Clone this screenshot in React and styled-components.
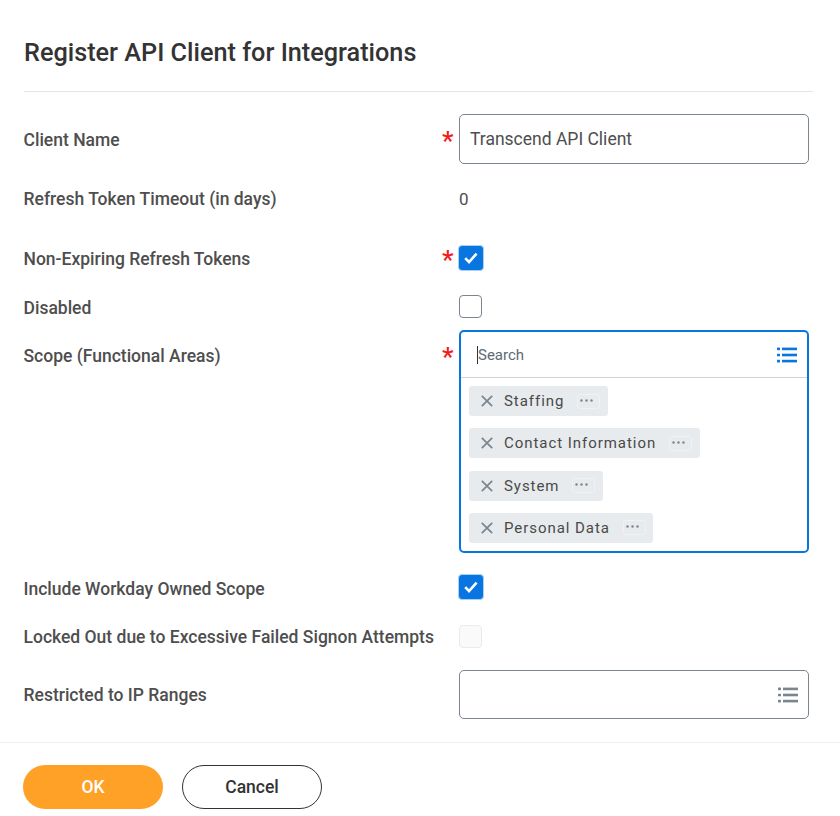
import React from "react"
import styled, { createGlobalStyle } from "styled-components"

const GlobalStyle = createGlobalStyle`
body {
  margin: 0;
  background: #fff;
  font-family: Roboto, "Liberation Sans", sans-serif;
  color: #494949;
}
`

const ListIcon = ({ color }) => (
  <svg width="20" height="16" viewBox="0 0 20 16" fill={color}>
    <rect x="0" y="0.6" width="3" height="2.6" rx="0.6" />
    <rect x="5" y="0.6" width="15" height="2.6" />
    <rect x="0" y="6.7" width="3" height="2.6" rx="0.6" />
    <rect x="5" y="6.7" width="15" height="2.6" />
    <rect x="0" y="12.8" width="3" height="2.6" rx="0.6" />
    <rect x="5" y="12.8" width="15" height="2.6" />
  </svg>
)

const CheckMark = () => (
  <svg width="14" height="12" viewBox="0 0 14 12" fill="none">
    <path d="M1.2 6.2 L5 10 L12.6 1.6" stroke="#fff" strokeWidth="2.6" />
  </svg>
)

const Pill = ({ label }) => (
  <Tag>
    <svg width="12" height="12" viewBox="0 0 12 12" fill="none">
      <path d="M0.8 0.8 L11.2 11.2 M11.2 0.8 L0.8 11.2" stroke="#7b858f" strokeWidth="1.7" />
    </svg>
    <TagLabel>{label}</TagLabel>
    <More>
      <svg width="13" height="3" viewBox="0 0 13 3" fill="#7b858f">
        <circle cx="1.5" cy="1.5" r="1.2" />
        <circle cx="6.5" cy="1.5" r="1.2" />
        <circle cx="11.5" cy="1.5" r="1.2" />
      </svg>
    </More>
  </Tag>
)

export default function App() {
  return (
    <Page>
      <GlobalStyle />
      <Header>
        <Title>Register API Client for Integrations</Title>
      </Header>
      <Form>
        <Row $height={50} $top={22}>
          <Label $offset={1}>Client Name</Label>
          <Star>*</Star>
          <Input>Transcend API Client</Input>
        </Row>
        <Row $height={24} $top={23}>
          <Label>Refresh Token Timeout (in days)</Label>
          <Star />
          <Value>0</Value>
        </Row>
        <Row $height={26} $top={34}>
          <Label $offset={1}>Non-Expiring Refresh Tokens</Label>
          <Star>*</Star>
          <CheckBox $checked><CheckMark /></CheckBox>
        </Row>
        <Row $height={24} $top={23}>
          <Label $offset={2}>Disabled</Label>
          <Star />
          <CheckBox />
        </Row>
        <ScopeRow>
          <Label>Scope (Functional Areas)</Label>
          <Star>*</Star>
          <ScopeBox>
            <SearchBar>
              <Caret />
              <SearchText>Search</SearchText>
              <ListIcon color="#0875e1" />
            </SearchBar>
            <TagList>
              <Pill label="Staffing" />
              <Pill label="Contact Information" />
              <Pill label="System" />
              <Pill label="Personal Data" />
            </TagList>
          </ScopeBox>
        </ScopeRow>
        <Row $height={26} $top={21}>
          <Label $offset={2}>Include Workday Owned Scope</Label>
          <Star />
          <CheckBox $checked><CheckMark /></CheckBox>
        </Row>
        <Row $height={24} $top={24}>
          <Label $offset={1}>Locked Out due to Excessive Failed Signon Attempts</Label>
          <Star />
          <CheckBox $disabled />
        </Row>
        <Row $height={49} $top={22}>
          <Label>Restricted to IP Ranges</Label>
          <Star />
          <Input>
            <span />
            <ListIcon color="#7b858f" />
          </Input>
        </Row>
      </Form>
      <Footer>
        <PrimaryButton>OK</PrimaryButton>
        <SecondaryButton>Cancel</SecondaryButton>
      </Footer>
    </Page>
  )
}

const Page = styled.div`
  width: 840px;
  height: 816px;
  overflow: hidden;
`

const Header = styled.div`
  margin: 0 27px 0 24px;
  height: 91px;
  border-bottom: 1px solid #e3e5e8;
  display: flex;
  align-items: center;
`

const Title = styled.h1`
  margin: 0 0 -15px;
  font-size: 25.25px;
  line-height: 30px;
  font-weight: 500;
  color: #333;
`

const Form = styled.div`
  padding-left: 24px;
  display: flex;
  flex-direction: column;
`

const Row = styled.div`
  display: flex;
  align-items: center;
  height: ${(p) => p.$height}px;
  margin-top: ${(p) => p.$top}px;
`

const ScopeRow = styled.div`
  display: flex;
  align-items: flex-start;
  margin-top: 12px;
`

const Label = styled.div`
  width: 418px;
  margin-left: -0.5px;
  padding-right: 0.5px;
  padding-top: ${(p) => (p.$offset || 0) * 2}px;
  font-size: 17.5px;
  line-height: 24px;
  font-weight: 500;
  color: #4e4e4e;
  white-space: nowrap;

  ${ScopeRow} > & {
    padding-top: 14px;
  }
`

const Star = styled.div`
  width: 17px;
  height: 24px;
  margin-top: -2px;
  color: #f31b1b;
  font-size: 26px;
  line-height: 30px;
  font-weight: 500;

  ${ScopeRow} > & {
    margin-top: 0;
    padding-top: 12px;
  }
`

const Input = styled.div`
  box-sizing: border-box;
  width: 350px;
  height: 100%;
  border: 1px solid #7b858f;
  border-radius: 5px;
  padding: 0 10px;
  display: flex;
  align-items: center;
  justify-content: space-between;
  font-size: 17.5px;
  color: #4e4e4e;
`

const Value = styled.div`
  font-size: 17px;
  color: #4e4e4e;
`

const CheckBox = styled.div`
  box-sizing: border-box;
  display: flex;
  align-items: center;
  justify-content: center;
  width: ${(p) => (p.$checked ? 26 : 23)}px;
  height: ${(p) => (p.$checked ? 26 : 23)}px;
  margin-left: ${(p) => (p.$checked ? -1 : 0)}px;
  border-radius: 4px;
  border: ${(p) => (p.$checked ? "1px solid #a9d0f5" : p.$disabled ? "1px solid #e8eaec" : "1px solid #7b858f")};
  background: ${(p) => (p.$checked ? "#0875e1" : p.$disabled ? "#fafafa" : "#fff")};
`

const ScopeBox = styled.div`
  box-sizing: border-box;
  width: 350px;
  height: 223px;
  border: 2px solid #0875e1;
  border-radius: 5px;
`

const SearchBar = styled.div`
  height: 45px;
  border-bottom: 1px solid #ced3d9;
  display: flex;
  align-items: center;
  padding: 0 10px 0 16px;
`

const Caret = styled.div`
  width: 1px;
  height: 18px;
  background: #333;
`

const SearchText = styled.div`
  flex: 1;
  font-size: 15px;
  color: #5e6a75;
`

const TagList = styled.div`
  display: flex;
  flex-direction: column;
  align-items: flex-start;
  gap: 12.33px;
  padding: 8px 0 0 8px;
`

const Tag = styled.div`
  height: 30px;
  display: flex;
  align-items: center;
  background: #e8ebed;
  border-radius: 3px;
  padding: 0 7.5px 0 12px;
`

const TagLabel = styled.div`
  margin-left: 11px;
  font-size: 15px;
  letter-spacing: 0.95px;
  color: #494949;
  white-space: nowrap;
`

const More = styled.div`
  box-sizing: border-box;
  margin-left: 13px;
  width: 23px;
  height: 15px;
  padding: 0 4px 2px 0;
  border: 1px solid #f0f1f2;
  border-radius: 3px;
  display: flex;
  align-items: center;
  justify-content: center;
`

const Footer = styled.div`
  margin-top: 23px;
  height: 74px;
  border-top: 1px solid #eceef0;
  padding: 22px 0 0 23px;
  display: flex;
  gap: 19px;
  box-sizing: border-box;
`

const PrimaryButton = styled.div`
  width: 140px;
  height: 44px;
  border-radius: 22px;
  background: #ffa126;
  color: #fff;
  font-size: 17.5px;
  font-weight: 500;
  display: flex;
  align-items: center;
  justify-content: center;
`

const SecondaryButton = styled.div`
  box-sizing: border-box;
  width: 140px;
  height: 44px;
  border-radius: 22px;
  border: 1px solid #333;
  background: #fff;
  color: #333;
  font-size: 17.5px;
  font-weight: 500;
  display: flex;
  align-items: center;
  justify-content: center;
`
